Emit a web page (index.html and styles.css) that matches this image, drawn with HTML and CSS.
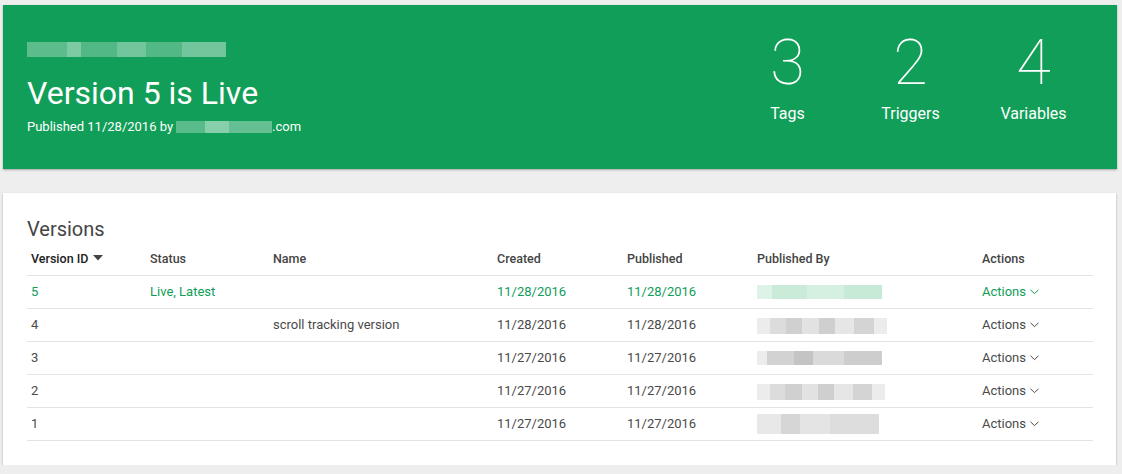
FILE: index.html
```html
<!DOCTYPE html>
<html>
<head>
<meta charset="utf-8">
<link rel="stylesheet" href="styles.css">
</head>
<body>
<div class="page">
  <section class="hero">
    <div class="hero-left">
      <div class="blur blur-head"></div>
      <h1 class="hero-title">Version 5 is Live</h1>
      <div class="hero-sub">Published 11/28/2016 by <span class="blur blur-mail"></span>.com</div>
    </div>
    <div class="stats">
      <div class="stat"><div class="stat-num">3</div><div class="stat-label">Tags</div></div>
      <div class="stat"><div class="stat-num">2</div><div class="stat-label">Triggers</div></div>
      <div class="stat"><div class="stat-num">4</div><div class="stat-label">Variables</div></div>
    </div>
  </section>

  <section class="card">
    <h2 class="card-title">Versions</h2>
    <div class="table">
      <div class="row head">
        <div class="cell">Version ID <svg class="sort" width="10" height="6" viewBox="0 0 10 6"><path d="M0 0H10L5 5.5Z" fill="#444"/></svg></div>
        <div class="cell muted">Status</div>
        <div class="cell muted">Name</div>
        <div class="cell muted">Created</div>
        <div class="cell muted">Published</div>
        <div class="cell muted">Published By</div>
        <div class="cell muted">Actions</div>
      </div>
      <div class="row live">
        <div class="cell">5</div>
        <div class="cell">Live, Latest</div>
        <div class="cell"></div>
        <div class="cell">11/28/2016</div>
        <div class="cell">11/28/2016</div>
        <div class="cell"><span class="blur blur-user green"></span></div>
        <div class="cell">Actions <svg class="chev" width="9" height="6" viewBox="0 0 9 6"><path d="M0.5 0.8L4.5 4.6L8.5 0.8" fill="none" stroke="currentColor" stroke-width="1"/></svg></div>
      </div>
      <div class="row">
        <div class="cell">4</div>
        <div class="cell"></div>
        <div class="cell">scroll tracking version</div>
        <div class="cell">11/28/2016</div>
        <div class="cell">11/28/2016</div>
        <div class="cell"><span class="blur blur-user g1"></span></div>
        <div class="cell">Actions <svg class="chev" width="9" height="6" viewBox="0 0 9 6"><path d="M0.5 0.8L4.5 4.6L8.5 0.8" fill="none" stroke="currentColor" stroke-width="1"/></svg></div>
      </div>
      <div class="row">
        <div class="cell">3</div>
        <div class="cell"></div>
        <div class="cell"></div>
        <div class="cell">11/27/2016</div>
        <div class="cell">11/27/2016</div>
        <div class="cell"><span class="blur blur-user g2"></span></div>
        <div class="cell">Actions <svg class="chev" width="9" height="6" viewBox="0 0 9 6"><path d="M0.5 0.8L4.5 4.6L8.5 0.8" fill="none" stroke="currentColor" stroke-width="1"/></svg></div>
      </div>
      <div class="row">
        <div class="cell">2</div>
        <div class="cell"></div>
        <div class="cell"></div>
        <div class="cell">11/27/2016</div>
        <div class="cell">11/27/2016</div>
        <div class="cell"><span class="blur blur-user g3"></span></div>
        <div class="cell">Actions <svg class="chev" width="9" height="6" viewBox="0 0 9 6"><path d="M0.5 0.8L4.5 4.6L8.5 0.8" fill="none" stroke="currentColor" stroke-width="1"/></svg></div>
      </div>
      <div class="row">
        <div class="cell">1</div>
        <div class="cell"></div>
        <div class="cell"></div>
        <div class="cell">11/27/2016</div>
        <div class="cell">11/27/2016</div>
        <div class="cell"><span class="blur blur-user g4"></span></div>
        <div class="cell">Actions <svg class="chev" width="9" height="6" viewBox="0 0 9 6"><path d="M0.5 0.8L4.5 4.6L8.5 0.8" fill="none" stroke="currentColor" stroke-width="1"/></svg></div>
      </div>
    </div>
  </section>
</div>
</body>
</html>
```

FILE: styles.css
```css
* { box-sizing: border-box; }
html, body { margin: 0; padding: 0; }
body {
  background: #eeeeee;
  font-family: Roboto, "Liberation Sans", Arial, sans-serif;
  color: #444;
}
.page {
  padding: 5px 5px 0 3px;
  display: flex;
  flex-direction: column;
  gap: 24px;
}
.hero {
  background: #119e58;
  height: 164px;
  display: flex;
  justify-content: space-between;
  align-items: flex-start;
  padding: 0 22px 0 24px;
  color: #fff;
  box-shadow: 0 1px 2px rgba(0,0,0,0.3);
}
.hero-left { padding-top: 37px; }
.blur { display: inline-block; }
.blur-head {
  display: block;
  width: 199px;
  height: 15px;
  background: linear-gradient(90deg,
    rgba(255,255,255,0.35) 0 20%, rgba(255,255,255,0.5) 20% 27%,
    rgba(255,255,255,0.3) 27% 45%, rgba(255,255,255,0.45) 45% 60%,
    rgba(255,255,255,0.3) 60% 78%, rgba(255,255,255,0.45) 78% 100%);
  opacity: 0.9;
}
.hero-title {
  margin: 17px 0 0;
  font-size: 32px;
  line-height: 38px;
  font-weight: 400;
}
.hero-sub {
  margin-top: 7px;
  font-size: 13px;
  line-height: 16px;
  display: flex;
  align-items: center;
}
.blur-mail {
  width: 96px;
  height: 12px;
  margin-left: 3px;
  background: linear-gradient(90deg,
    rgba(255,255,255,0.3) 0 30%, rgba(255,255,255,0.5) 30% 55%,
    rgba(255,255,255,0.35) 55% 100%);
}
.stats {
  display: flex;
  padding-top: 26px;
}
.stat {
  width: 123px;
  text-align: center;
}
.stat-num {
  font-size: 63px;
  line-height: 64px;
  font-weight: 100;
}
.stat-label {
  margin-top: 9px;
  font-size: 16px;
  line-height: 20px;
}

.card {
  background: #fff;
  padding: 24px 23px 24px 24px;
  box-shadow: 0 1px 2px rgba(0,0,0,0.3);
  width: 1113px;
}
.card-title {
  margin: 0;
  font-size: 20px;
  line-height: 24px;
  font-weight: 400;
  color: #444;
}
.table { display: flex; flex-direction: column; }
.row {
  display: grid;
  grid-template-columns: 119px 123px 224px 130px 130px 225px 115px;
  height: 33px;
  align-items: center;
  border-bottom: 1px solid #e3e3e3;
  font-size: 13px;
  color: #4a4a4a;
}
.row > .cell { margin-top: -1px; }
.row.head {
  height: 35px;
  font-weight: 500;
  font-size: 12.5px;
  color: #222;
}
.row.head > .cell { margin-top: 0; }
.row.head .muted { color: #444; }
.cell {
  padding-left: 4px;
  white-space: nowrap;
  display: flex;
  align-items: center;
}
.sort { margin-left: 5px; }
.chev { margin-left: 4px; margin-top: 1px; }
.row.live { color: #0f9d58; }
.blur-user {
  width: 125px;
  height: 14px;
  background: linear-gradient(90deg, #ececec 0 10%, #dcdcdc 10% 22%, #d0d0d0 22% 35%, #e2e2e2 35% 48%, #cfcfcf 48% 60%, #e6e6e6 60% 75%, #d4d4d4 75% 90%, #ececec 90% 100%);
}
.blur-user.green {
  background: linear-gradient(90deg, #def3e7 0 12%, #c9ebd7 12% 40%, #d5efe0 40% 70%, #c7ead6 70% 100%);
}
.blur-user.g1 { width: 130px; height: 16px; margin-top: 2px; }
.blur-user.g2 { background: linear-gradient(90deg, #ececec 0 8%, #d2d2d2 8% 30%, #c4c4c4 30% 45%, #dadada 45% 70%, #cdcdcd 70% 100%); }
.blur-user.g3 { width: 128px; height: 16px; margin-top: 2px; }
.blur-user.g4 { width: 122px; height: 20px; background: linear-gradient(90deg, #e8e8e8 0 20%, #d6d6d6 20% 35%, #e4e4e4 35% 60%, #dddddd 60% 100%); }
```
